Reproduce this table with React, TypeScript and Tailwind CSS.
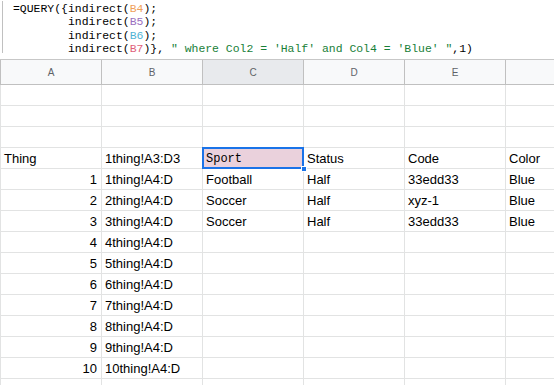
import React from 'react';

const mono = { fontFamily: '"Liberation Mono", "DejaVu Sans Mono", monospace' };
const sans = { fontFamily: '"Liberation Sans", Arial, sans-serif' };

type Row = { a?: string; aNum?: boolean; b?: string; c?: string; d?: string; e?: string; f?: string; selected?: boolean };

const matches = [
  ['Football', 'Half', '33edd33', 'Blue'],
  ['Soccer', 'Half', 'xyz-1', 'Blue'],
  ['Soccer', 'Half', '33edd33', 'Blue'],
];

const rows: Row[] = [
  {},
  {},
  {},
  { a: 'Thing', b: '1thing!A3:D3', c: 'Sport', d: 'Status', e: 'Code', f: 'Color', selected: true },
  ...Array.from({ length: 10 }, (_, i) => {
    const m = matches[i];
    return {
      a: String(i + 1),
      aNum: true,
      b: `${i + 1}thing!A4:D`,
      c: m?.[0],
      d: m?.[1],
      e: m?.[2],
      f: m?.[3],
    };
  }),
  {},
];

function Cell({ children, right, last }: { children?: React.ReactNode; right?: boolean; last?: boolean }) {
  return (
    <div
      className={`h-full flex items-end pb-[1px] px-[3px] text-[13px] leading-[16px] text-black whitespace-nowrap overflow-hidden ${
        right ? 'justify-end pr-[4px]' : ''
      } ${last ? 'flex-1' : 'w-[101px] shrink-0 border-r border-[#e2e3e3]'}`}
    >
      {children}
    </div>
  );
}

export default function App() {
  const cols = ['A', 'B', 'C', 'D', 'E'];

  return (
    <div className="w-[554px] h-[385px] overflow-hidden bg-white" style={sans}>
      {/* formula bar */}
      <div className="h-[60px] border-b border-[#c7c7c7] pt-[1px] pl-[2px]">
        <div
          className="h-[52px] border-l border-[#c0c0c0] pl-[10px] pt-[1px] text-[11.45px] leading-[13.4px] text-black whitespace-pre"
          style={mono}
        >
          <div>
            =QUERY({'{'}indirect(<span className="text-[#f0a05a]">B4</span>);
          </div>
          <div>
            {'        '}indirect(<span className="text-[#9b6fc0]">B5</span>);
          </div>
          <div>
            {'        '}indirect(<span className="text-[#4fb3d4]">B6</span>);
          </div>
          <div>
            {'        '}indirect(<span className="text-[#e0607a]">B7</span>){'}'},{' '}
            <span className="text-[#188038]">" where Col2 = 'Half' and Col4 = 'Blue' "</span>,1)
          </div>
        </div>
      </div>

      {/* column headers */}
      <div className="flex h-[25px] border-b border-[#c0c0c0] bg-[#f8f9fa] border-l">
        {cols.map((c) => (
          <div
            key={c}
            className={`w-[101px] shrink-0 border-r border-[#c0c0c0] flex items-center justify-center text-[10px] text-[#5f6368] ${
              c === 'C' ? 'bg-[#e8eaed]' : ''
            }`}
          >
            {c}
          </div>
        ))}
        <div className="flex-1" />
      </div>

      {/* rows */}
      <div className="border-l border-[#e2e3e3]">
        {rows.map((r, i) => (
          <div key={i} className="flex h-[21px] border-b border-[#e2e3e3]">
            <Cell right={r.aNum}>{r.a}</Cell>
            <Cell>{r.b}</Cell>
            {r.selected ? (
              <div className="relative w-[101px] shrink-0 h-full border-r border-[#e2e3e3] bg-[#ead1dc]">
                <div
                  className="h-full flex items-end pb-[1px] px-[3px] text-[12px] leading-[16px] text-black"
                  style={mono}
                >
                  {r.c}
                </div>
                <div className="absolute -left-[1px] -top-[1px] -right-[1px] -bottom-[1px] border-2 border-[#1a73e8]" />
                <div className="absolute -right-[4px] -bottom-[4px] w-[6px] h-[6px] bg-[#1a73e8] border border-white" />
              </div>
            ) : (
              <Cell>{r.c}</Cell>
            )}
            <Cell>{r.d}</Cell>
            <Cell>{r.e}</Cell>
            <Cell last>{r.f}</Cell>
          </div>
        ))}
      </div>
    </div>
  );
}
